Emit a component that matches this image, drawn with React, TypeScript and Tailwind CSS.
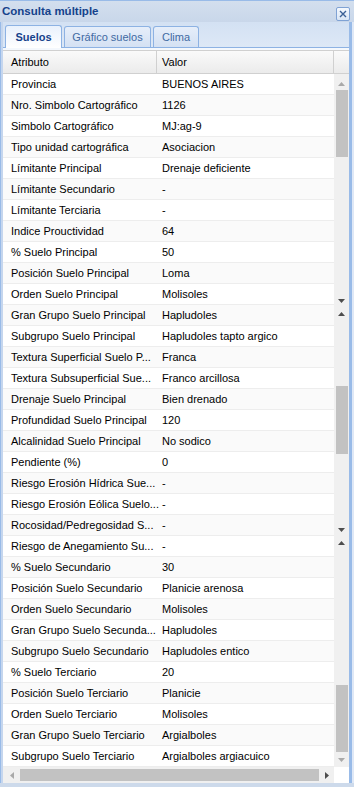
const ROWS: [string, string][] = [
  ["Provincia", "BUENOS AIRES"],
  ["Nro. Simbolo Cartográfico", "1126"],
  ["Simbolo Cartográfico", "MJ:ag-9"],
  ["Tipo unidad cartográfica", "Asociacion"],
  ["Límitante Principal", "Drenaje deficiente"],
  ["Límitante Secundario", "-"],
  ["Límitante Terciaria", "-"],
  ["Indice Prouctividad", "64"],
  ["% Suelo Principal", "50"],
  ["Posición Suelo Principal", "Loma"],
  ["Orden Suelo Principal", "Molisoles"],
  ["Gran Grupo Suelo Principal", "Hapludoles"],
  ["Subgrupo Suelo Principal", "Hapludoles tapto argico"],
  ["Textura Superficial Suelo P...", "Franca"],
  ["Textura Subsuperficial Sue...", "Franco arcillosa"],
  ["Drenaje Suelo Principal", "Bien drenado"],
  ["Profundidad Suelo Principal", "120"],
  ["Alcalinidad Suelo Principal", "No sodico"],
  ["Pendiente (%)", "0"],
  ["Riesgo Erosión Hídrica Sue...", "-"],
  ["Riesgo Erosión Eólica Suelo...", "-"],
  ["Rocosidad/Pedregosidad S...", "-"],
  ["Riesgo de Anegamiento Su...", "-"],
  ["% Suelo Secundario", "30"],
  ["Posición Suelo Secundario", "Planicie arenosa"],
  ["Orden Suelo Secundario", "Molisoles"],
  ["Gran Grupo Suelo Secunda...", "Hapludoles"],
  ["Subgrupo Suelo Secundario", "Hapludoles entico"],
  ["% Suelo Terciario", "20"],
  ["Posición Suelo Terciario", "Planicie"],
  ["Orden Suelo Terciario", "Molisoles"],
  ["Gran Grupo Suelo Terciario", "Argialboles"],
  ["Subgrupo Suelo Terciario", "Argialboles argiacuico"],
];

type Dir = "up" | "down" | "left" | "right";

const POINTS: Record<Dir, string> = {
  up: "0,4 7,4 3.5,0",
  down: "0,0 7,0 3.5,4",
  left: "4,0 4,7 0,3.5",
  right: "0,0 0,7 4,3.5",
};

function Arrow({ dir, light }: { dir: Dir; light?: boolean }) {
  const horiz = dir === "left" || dir === "right";
  return (
    <svg width={horiz ? 4 : 7} height={horiz ? 7 : 4} viewBox={horiz ? "0 0 4 7" : "0 0 7 4"}>
      <polygon points={POINTS[dir]} fill={light ? "#a9a9a9" : "#4d4d4d"} />
    </svg>
  );
}

function VArrow({ dir, light }: { dir: Dir; light?: boolean }) {
  return (
    <div className="h-[13px] w-full flex items-center justify-center">
      <Arrow dir={dir} light={light} />
    </div>
  );
}

function Thumb({ h }: { h: string }) {
  return <div className={`${h} w-[12px] ml-[2px] self-start bg-[#c2c2c2]`} />;
}

// stitched vertical scroller (three scroll positions of the same grid)
function VScroll() {
  return (
    <div className="w-[15px] bg-[#f0f0f0] flex flex-col items-center">
      <div className="h-[3px]" />
      <VArrow dir="up" light />
      <Thumb h="h-[67px]" />
      <div className="h-[137px]" />
      <VArrow dir="down" />
      <VArrow dir="up" />
      <div className="h-[66px]" />
      <Thumb h="h-[68px]" />
      <div className="h-[69px]" />
      <VArrow dir="down" />
      <VArrow dir="up" />
      <div className="h-[136px]" />
      <Thumb h="h-[67px]" />
      <div className="h-[1px]" />
      <VArrow dir="down" light />
    </div>
  );
}

function Tab({ label, active, w }: { label: string; active?: boolean; w: string }) {
  if (active) {
    return (
      <div
        className={`${w} h-[23px] -mb-px rounded-t-[3px] border border-b-0 border-[#8db2e3] bg-gradient-to-b from-[#e9f1fc] to-[#ffffff] flex items-center justify-center font-bold text-[#15428b]`}
      >
        {label}
      </div>
    );
  }
  return (
    <div
      className={`${w} h-[21px] rounded-t-[3px] border border-b-0 border-[#8db2e3] bg-gradient-to-b from-[#e6eefa] to-[#d4e1f3] flex items-center justify-center text-[#416aa3]`}
    >
      {label}
    </div>
  );
}

export default function App() {
  return (
    <div className="w-[354px] h-[787px] overflow-hidden bg-[#cddaeb] text-[11px] text-black font-['Liberation_Sans',Arial,sans-serif]">
      {/* title bar */}
      <div className="h-[22px] border-t border-[#99bbe8] bg-gradient-to-b from-[#d3dfee] to-[#c9d7ea] flex items-center justify-between pl-[2px] pr-[4px]">
        <span className="font-bold text-[11.5px] text-[#15428b]">Consulta múltiple</span>
        <div className="mt-[4px] w-[14px] h-[14px] rounded-[2px] border border-[#7fa2d4] bg-gradient-to-b from-[#f4f8fd] to-[#d9e5f5] flex items-center justify-center">
          <svg width="8" height="8" viewBox="0 0 8 8">
            <path d="M1 1 L7 7 M7 1 L1 7" stroke="#3a5f95" strokeWidth="1.4" />
          </svg>
        </div>
      </div>

      <div className="flex h-[761px]">
        <div className="w-[3px] border-l border-[#99bbe8] bg-[#c5d6ee]" />

        <div className="w-[346px] flex flex-col">
          {/* tab strip */}
          <div className="h-[26px] bg-gradient-to-b from-[#d3e1f3] to-[#dde8f6] border-b border-[#8db2e3] flex items-end pl-[2px] gap-[2px]">
            <Tab label="Suelos" active w="w-[57px]" />
            <Tab label="Gráfico suelos" w="w-[87px]" />
            <Tab label="Clima" w="w-[46px]" />
          </div>
          <div className="h-[2px] bg-[#f4f8fd]" />

          {/* grid header */}
          <div className="h-[24px] flex border-y border-[#d0d0d0] bg-gradient-to-b from-[#fafafa] to-[#ebebeb]">
            <div className="w-[154px] border-r border-[#d0d0d0] pl-[8px] flex items-center">Atributo</div>
            <div className="w-[177px] border-r border-[#d0d0d0] pl-[5px] flex items-center">Valor</div>
            <div className="flex-1" />
          </div>

          {/* rows + scroller */}
          <div className="flex h-[693px] bg-white">
            <div className="w-[331px] flex flex-col">
              {ROWS.map(([label, value], i) => (
                <div
                  key={label}
                  className={`h-[21px] shrink-0 flex items-center border-b border-[#ededed] ${
                    i % 2 === 1 ? "bg-[#fafafa]" : "bg-white"
                  }`}
                >
                  <div className="w-[154px] pl-[8px] whitespace-nowrap">{label}</div>
                  <div className="pl-[5px] whitespace-nowrap">{value}</div>
                </div>
              ))}
            </div>
            <VScroll />
          </div>

          {/* horizontal scroller */}
          <div className="h-[16px] flex">
            <div className="w-[331px] bg-[#f0f0f0] flex items-center">
              <div className="w-[17px] flex justify-center">
                <Arrow dir="left" light />
              </div>
              <div className="w-[299px] h-[12px] bg-[#c2c2c2]" />
              <div className="flex-1 flex justify-center">
                <Arrow dir="right" />
              </div>
            </div>
            <div className="flex-1 bg-white" />
          </div>
          <div className="flex-1 bg-[#99bbe8]" />
        </div>

        <div className="w-[5px] bg-[#99bbe8] border-r-2 border-[#dfe8f6]" />
      </div>
    </div>
  );
}
